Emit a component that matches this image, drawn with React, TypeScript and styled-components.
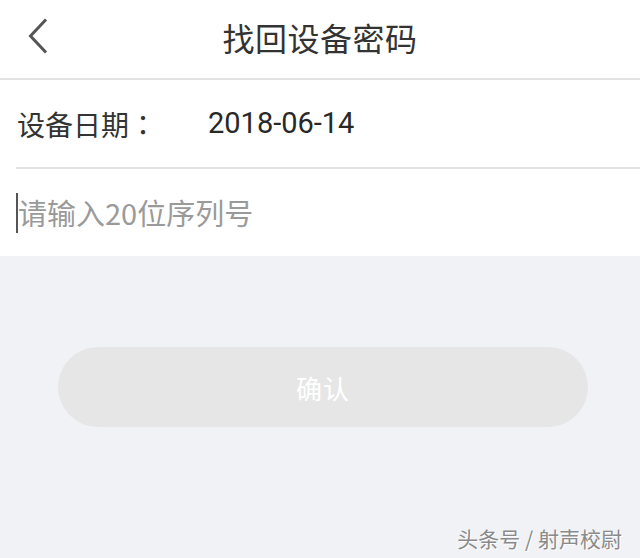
import styled, { createGlobalStyle } from "styled-components";

const GlobalStyle = createGlobalStyle`
    html, body {
        margin: 0;
        padding: 0;
        background: #f1f2f6;
    }
    body {
        font-family: "Noto Sans CJK SC", Roboto, "Noto Sans", sans-serif;
    }
`;

const Page = styled.div`
    width: 640px;
    height: 558px;
    background: #f1f2f6;
    display: flex;
    flex-direction: column;
    position: relative;
    overflow: hidden;
`;

const Header = styled.div`
    height: 78px;
    background: #fff;
    border-bottom: 2px solid #e2e2e2;
    display: flex;
    align-items: center;
    justify-content: center;
    position: relative;
`;

const BackButton = styled.div`
    position: absolute;
    left: 26px;
    top: 17px;
    width: 24px;
    height: 38px;
    display: flex;
    align-items: center;
`;

const Title = styled.h1`
    margin: 0;
    font-size: 32px;
    font-weight: 400;
    color: #333;
    letter-spacing: 0.5px;
    transform: translateY(-2px);
`;

const Form = styled.div`
    background: #fff;
    padding-left: 16px;
`;

const Row = styled.div<{ $divider?: boolean }>`
    height: 87px;
    display: flex;
    align-items: center;
    border-bottom: ${(p) => (p.$divider ? "2px solid #e2e2e2" : "none")};
`;

const Label = styled.span`
    font-size: 28px;
    color: #333;
    width: 191px;
    padding-left: 1px;
`;

const Colon = styled.span`
    font-family: "Noto Sans CJK TC", sans-serif;
`;

const Value = styled.span`
    font-family: Roboto, "Noto Sans CJK SC", sans-serif;
    font-size: 29px;
    color: #282828;
    transform: translateY(-1px);
`;

const Input = styled.div`
    display: flex;
    align-items: center;
    font-size: 29px;
    color: #9a9a9a;
`;

const Caret = styled.span`
    display: inline-block;
    width: 2px;
    height: 40px;
    background: #555;
`;

const Placeholder = styled.span`
    font-family: "Noto Sans CJK SC", Roboto, sans-serif;
    transform: translateY(-1px);
`;

const ButtonArea = styled.div`
    padding: 91px 52px 0 58px;
`;

const ConfirmButton = styled.button`
    width: 530px;
    height: 80px;
    border: none;
    border-radius: 40px;
    background: #e6e6e6;
    color: #fff;
    font-family: "Noto Sans CJK SC", sans-serif;
    font-size: 26px;
    padding: 0;
    letter-spacing: 1px;
`;

const Watermark = styled.div`
    position: absolute;
    right: 18px;
    bottom: 5px;
    font-size: 21px;
    color: #8a8a8a;
    text-shadow: 1px 1px 0 #fff;
`;

export default function App() {
    return (
        <Page>
            <GlobalStyle />
            <Header>
                <BackButton>
                    <svg width="24" height="38" viewBox="0 0 24 38">
                        <path d="M20 2.5 L4.5 19 L20 35.5" fill="none" stroke="#555" strokeWidth="3" />
                    </svg>
                </BackButton>
                <Title>找回设备密码</Title>
            </Header>
            <Form>
                <Row $divider>
                    <Label>
                        设备日期<Colon>：</Colon>
                    </Label>
                    <Value>2018-06-14</Value>
                </Row>
                <Row>
                    <Input>
                        <Caret />
                        <Placeholder>请输入20位序列号</Placeholder>
                    </Input>
                </Row>
            </Form>
            <ButtonArea>
                <ConfirmButton>确认</ConfirmButton>
            </ButtonArea>
            <Watermark>头条号 / 射声校尉</Watermark>
        </Page>
    );
}
